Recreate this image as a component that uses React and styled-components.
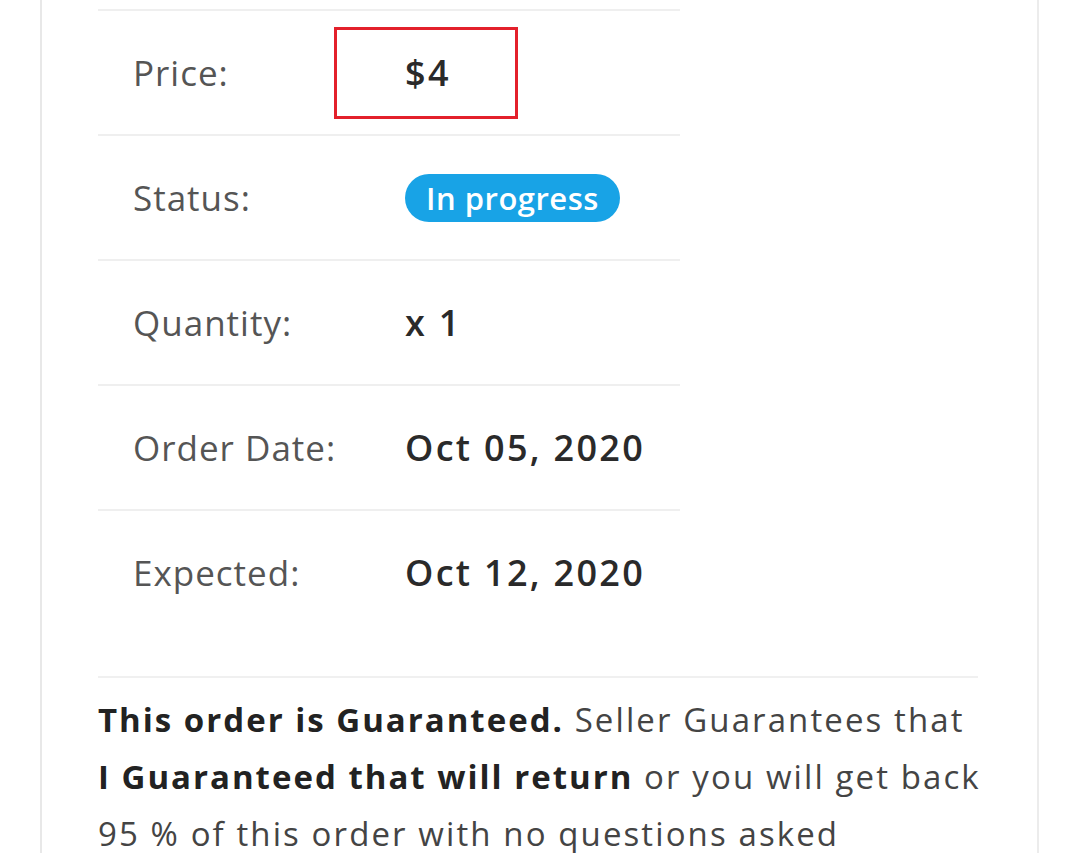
import React from "react"
import styled, { createGlobalStyle } from "styled-components"

const Global = createGlobalStyle`
  html, body {
    margin: 0;
    padding: 0;
    background: #fff;
  }
  body {
    font-family: "Open Sans", "Noto Sans", sans-serif;
    color: #333;
  }
`

const Card = styled.div`
  margin-left: 40px;
  width: 999px;
  height: 853px;
  box-sizing: border-box;
  border-left: 2px solid #e8e8e8;
  border-right: 2px solid #ececec;
  padding: 9px 0 0 56px;
  overflow: hidden;
`

const Table = styled.div`
  width: 582px;
`

const Row = styled.div`
  display: flex;
  align-items: center;
  height: 125px;
  box-sizing: border-box;
  border-top: 2px solid #efefef;
  padding-left: 35px;
`

const Label = styled.div`
  width: 272px;
  flex-shrink: 0;
  font-size: 35px;
  letter-spacing: 1px;
  color: #555;
`

const Value = styled.div`
  position: relative;
  font-size: 36px;
  font-weight: 600;
  letter-spacing: 2.3px;
  color: #2a2a2a;
`

const Badge = styled.span`
  display: inline-block;
  background: #18a3e6;
  color: #fff;
  font-size: 31px;
  font-weight: 600;
  letter-spacing: 0.5px;
  line-height: 48px;
  padding: 0 21px;
  border-radius: 24px;
`

const Highlight = styled.div`
  position: absolute;
  left: -71px;
  top: 50%;
  margin-top: -46px;
  width: 184px;
  height: 92px;
  box-sizing: border-box;
  border: 3px solid #e3202b;
  pointer-events: none;
`

const Note = styled.div`
  margin-top: 42px;
  width: 880px;
  border-top: 2px solid #f0f0f0;
  padding-top: 13px;
  font-size: 33px;
  line-height: 57px;
  color: #444;
  letter-spacing: 2.1px;
  white-space: nowrap;

  b {
    color: #222;
    font-weight: 700;
    letter-spacing: 2px;
  }
`

const rows = [
  { label: "Price:", value: "$4", highlight: true },
  { label: "Status:", badge: "In progress" },
  { label: "Quantity:", value: "x 1" },
  { label: "Order Date:", value: "Oct 05, 2020" },
  { label: "Expected:", value: "Oct 12, 2020" },
]

export default function App() {
  return (
    <>
      <Global />
      <Card>
        <Table>
          {rows.map((r) => (
            <Row key={r.label}>
              <Label>{r.label}</Label>
              {r.badge ? (
                <Badge>{r.badge}</Badge>
              ) : (
                <Value>
                  {r.value}
                  {r.highlight && <Highlight />}
                </Value>
              )}
            </Row>
          ))}
        </Table>
        <Note>
          <b>This order is Guaranteed.</b> Seller Guarantees that
          <br />
          <b>I Guaranteed that will return</b> or you will get back
          <br />
          95 % of this order with no questions asked
        </Note>
      </Card>
    </>
  )
}
